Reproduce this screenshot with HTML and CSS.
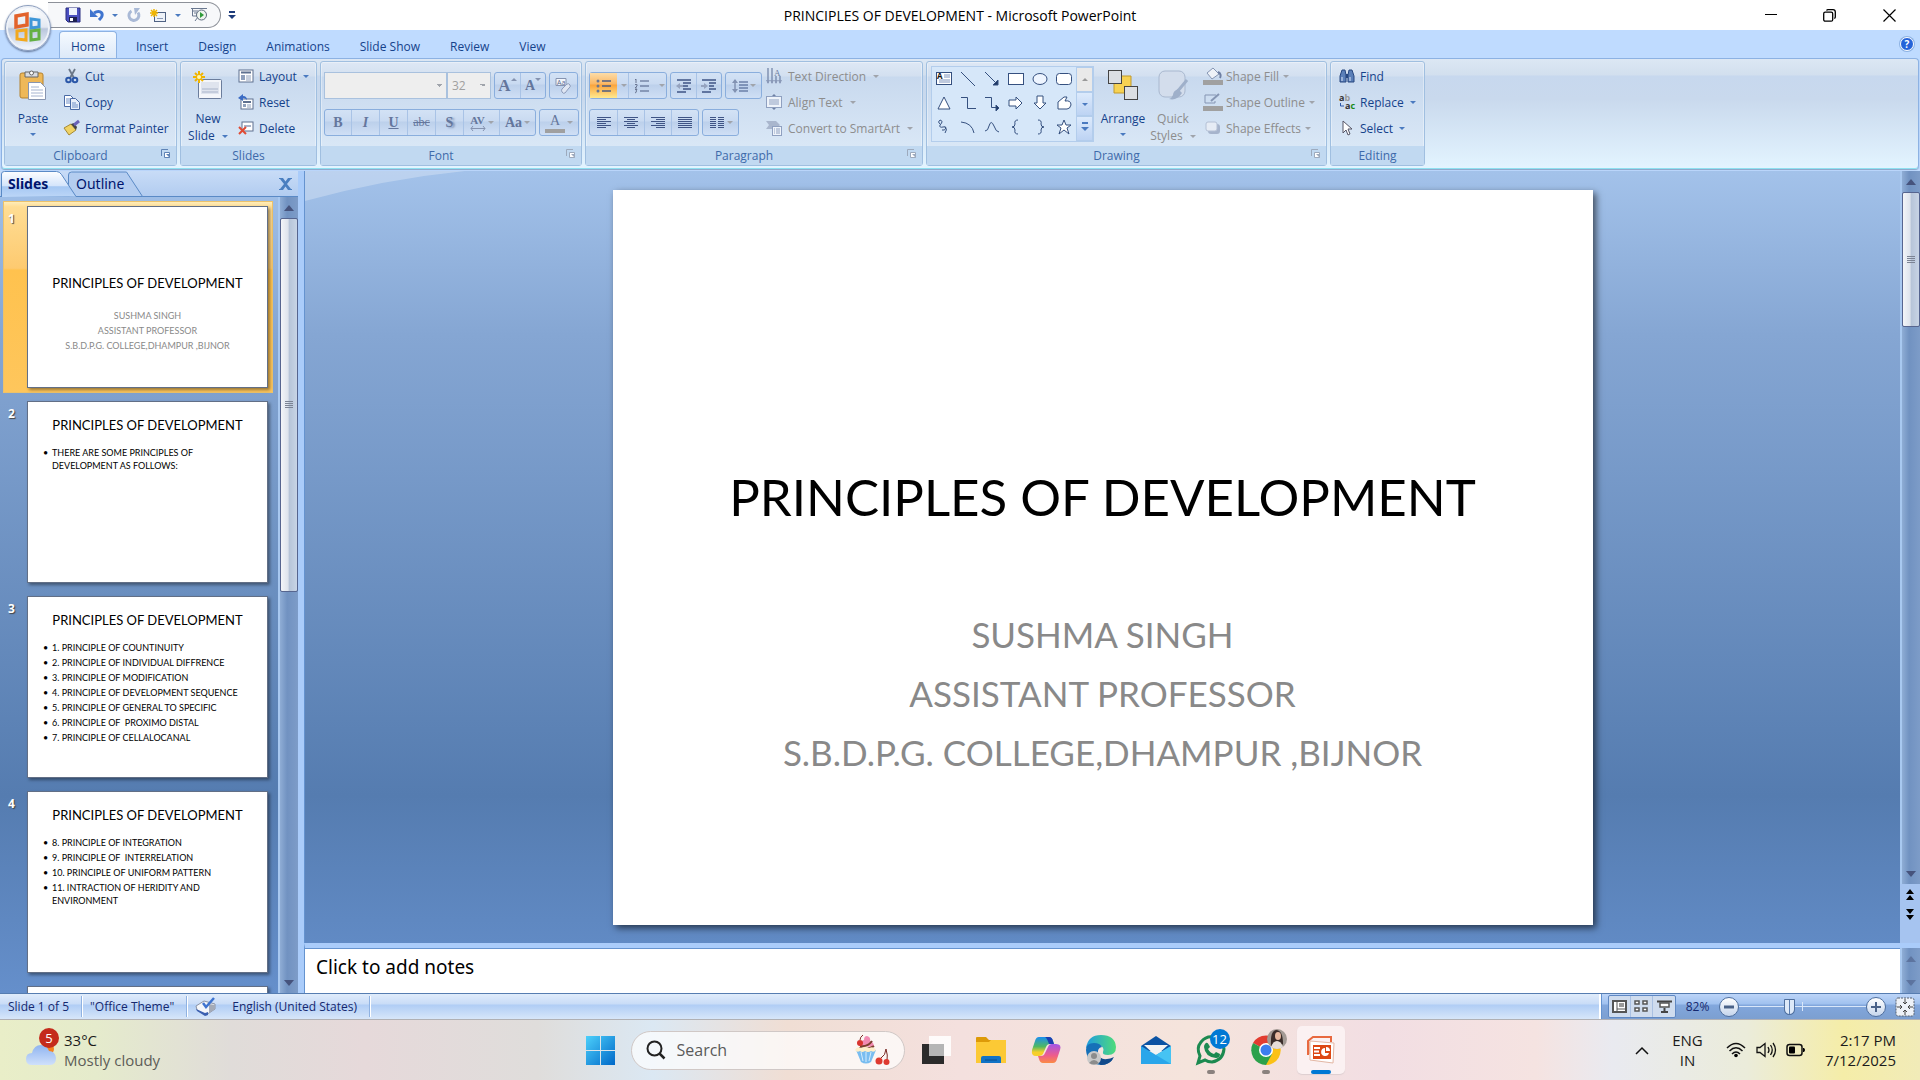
FILE: index.html
```
<!DOCTYPE html>
<html lang="en">
<head>
    <meta charset="UTF-8">
    <meta name="viewport" content="width=device-width, initial-scale=1.0">
    <title>PRINCIPLES OF DEVELOPMENT - Microsoft PowerPoint</title>
    <link rel="stylesheet" href="styles.css">
</head>
<body>
    <!-- shared icons -->
    <svg class="defs" width="0" height="0">
        <symbol id="launcher" viewBox="0 0 10 10"><path d="M.5 7V.5H7" fill="none" stroke="currentColor"/><path d="M3.500 3.500h5v5h-5z" fill="#fff" stroke="currentColor"/><path d="M5 5l4 4V5z" fill="currentColor"/></symbol>
        <symbol id="new-slide" viewBox="0 0 30 28">
            <rect x="5.500" y="8.500" width="23" height="19" rx="1" fill="#f4f6fa" stroke="#6b7d9c"/>
            <path d="M8 11h18v12H8z" fill="#dfe4ee"/><path d="M9 18h16M9 21h16" stroke="#a9b4ca"/>
            <path d="M6 0v12M0 6h12M2 2l8 8M10 2l-8 8" stroke="#f0b400" stroke-width="2"/><circle cx="6" cy="6" r="2" fill="#fff6b0"/>
        </symbol>
    </svg>

    <header class="title-bar">
        <div class="left">
            <div class="quick-access">
                <button title="Save"><svg width="16" height="16" viewBox="0 0 16 16"><path d="M1 1h14v14H3l-2-2z" fill="#4a4fc0" stroke="#2a2f80"/><path d="M4 1h8v7H4z" fill="#eef2fc"/><path d="M4 10h8v5H4z" fill="#1d2050"/><path d="M5 11h3v3H5z" fill="#fff"/></svg></button>
                <button title="Undo"><svg width="14" height="14" viewBox="0 0 14 14"><path d="M4 5c5-3 9-1 8 3-.5 2-2 3-3 4" fill="none" stroke="#3f74cf" stroke-width="3"/><path d="M0 1v8h8z" fill="#3f74cf"/></svg></button>
                <span class="caret"></span>
                <button title="Redo"><svg width="14" height="14" viewBox="0 0 14 14"><path d="M4.500 3A5 5 0 1 0 11 4.500" fill="none" stroke="#a9b9d6" stroke-width="3"/><path d="M7 0h6L8 7z" fill="#a9b9d6"/></svg></button>
                <button title="New Slide"><svg width="17" height="13" viewBox="0 0 17 13"><rect x="4.500" y="3.500" width="11" height="9" fill="#eef2f8" stroke="#4f6284"/><path d="M7 9.500h6" stroke="#8c9bb8"/><path d="M4 0v8M0 4h8M1 1l6 6M7 1L1 7" stroke="#f0b400" stroke-width="1.500"/></svg></button>
                <span class="caret"></span>
                <button title="Slide Show"><svg width="18" height="16" viewBox="0 0 18 16"><path d="M1 1.500h16M2.500 2v7H8M5 14l3-4M3 4h5M4 6h4" fill="none" stroke="#6a7890"/><circle cx="11.500" cy="8" r="5" fill="#eef4ee" stroke="#5e6b80"/><path d="M10 5l4 3-4 3z" fill="#2f9a3a"/></svg></button>
            </div>
            <button class="customize" title="Customize"><svg width="8" height="8" viewBox="0 0 8 8"><path d="M1 1h6" stroke="#1e3c7b" stroke-width="2"/><path d="M0 4h8L4 8z" fill="#1e3c7b"/></svg></button>
        </div>
        <h1>PRINCIPLES OF DEVELOPMENT - Microsoft PowerPoint</h1>
        <div class="window-buttons">
            <button title="Minimize"><svg width="12" height="12" viewBox="0 0 12 12"><path d="M0 5.500h12" stroke="#000"/></svg></button>
            <button title="Restore"><svg width="13" height="13" viewBox="0 0 13 13"><path d="M3.500 1.500Q4 .7 5 .7h5q2.300 0 2.300 2.300v5q0 1-1 1.500" fill="none" stroke="#000" stroke-width="1.300"/><rect x=".7" y="3.200" width="9" height="9" rx="1.500" fill="none" stroke="#000" stroke-width="1.300"/></svg></button>
            <button title="Close"><svg width="13" height="13" viewBox="0 0 13 13"><path d="M.5.5l12 12M12.500.5l-12 12" stroke="#000" stroke-width="1.200"/></svg></button>
        </div>
    </header>

    <button class="office-button" title="Office Button">
        <svg width="28" height="30" viewBox="0 0 28 30">
            <path d="M2 3l11-2v11l-11 2z" fill="none" stroke="#e2622b" stroke-width="3.500"/>
            <path d="M17 6l8 1v7l-8 1z" fill="none" stroke="#3f97d8" stroke-width="3"/>
            <path d="M3 18l9-1v10l-9-1z" fill="none" stroke="#f2a81d" stroke-width="3"/>
            <path d="M17 18l8-1v9l-8 1z" fill="none" stroke="#63b043" stroke-width="3"/>
        </svg>
    </button>

    <nav class="tabs">
        <a href="#" class="active">Home</a>
        <a href="#">Insert</a>
        <a href="#">Design</a>
        <a href="#">Animations</a>
        <a href="#">Slide Show</a>
        <a href="#">Review</a>
        <a href="#">View</a>
        <button class="help" title="Help">?</button>
    </nav>

    <section class="ribbon">
        <div class="group clipboard">
            <div class="group-body">
                <button class="big"><svg width="28" height="30" viewBox="0 0 28 30"><rect x="1" y="3" width="23" height="25" rx="2" fill="#eeb858" stroke="#b5822f"/><path d="M6 2h13v5H6z" fill="#d9dce2" stroke="#666"/><circle cx="12.500" cy="3" r="2" fill="#fff" stroke="#666"/><path d="M9.500 12.500h12l5 5v12h-17z" fill="#fff" stroke="#8795b0"/><path d="M12 17h8M12 20h12M12 23h12M12 26h12" stroke="#a6b4cf"/></svg><span>Paste</span><span class="caret"></span></button>
                <div class="rows">
                    <button><svg width="16" height="16" viewBox="0 0 16 16"><path d="M5 1l5 9M11 1l-5 9" stroke="#6b7788" stroke-width="1.800"/><circle cx="4.500" cy="12" r="2.300" fill="none" stroke="#2b57a8" stroke-width="2"/><circle cx="11" cy="12" r="2.300" fill="none" stroke="#2b57a8" stroke-width="2"/></svg>Cut</button>
                    <button><svg width="16" height="16" viewBox="0 0 16 16"><path d="M.5 1.500h6l3 3v8h-9z" fill="#fff" stroke="#4a6aa5"/><path d="M6.500 4.500h5l4 4v7h-9z" fill="#e9effa" stroke="#4a6aa5"/><path d="M2 5h4M2 7h4M2 9h4M8 9h4M8 11h6M8 13h6" stroke="#6f8fc7"/></svg>Copy</button>
                    <button><svg width="16" height="16" viewBox="0 0 16 16"><path d="M0 8l7-4 5 6-7 5z" fill="#f0d264" stroke="#a58a35"/><path d="M7 4l5 6 1-3-3-4z" fill="#444"/><path d="M10 5l5-4" stroke="#6a62b8" stroke-width="3"/></svg>Format Painter</button>
                </div>
            </div>
            <div class="group-name has-launcher">Clipboard<svg class="launcher" width="10" height="10"><use href="#launcher"/></svg></div>
        </div>

        <div class="group slides">
            <div class="group-body">
                <button class="big"><svg width="30" height="28"><use href="#new-slide"/></svg><span>New</span><span>Slide <i class="caret"></i></span></button>
                <div class="rows">
                    <button><svg width="16" height="16" viewBox="0 0 16 16"><rect x="1" y="2" width="14" height="12" fill="#fff" stroke="#5f7190"/><path d="M3 4.500h10" stroke="#5f7190" stroke-width="2"/><path d="M3 7h4v5H3z" fill="#8fa0bc"/><path d="M8 8h5M8 10h5M8 12h5" stroke="#8fa0bc"/></svg>Layout <i class="caret"></i></button>
                    <button><svg width="16" height="16" viewBox="0 0 16 16"><rect x="3" y="5" width="12" height="10" fill="#fff" stroke="#5f7190"/><path d="M5 8h8" stroke="#5f7190" stroke-width="2"/><path d="M5 10h3v3H5z" fill="#8fa0bc"/><path d="M9 11h4M9 13h4" stroke="#8fa0bc"/><path d="M0 4l5-4v2c3 0 4 2 4 4-1-1-2-2-4-2v3z" fill="#3c6cc4"/></svg>Reset</button>
                    <button><svg width="16" height="16" viewBox="0 0 16 16"><rect x="4" y="2" width="11" height="9" fill="#fff" stroke="#5f7190"/><path d="M6 6h7" stroke="#a9b4ca" stroke-width="2"/><path d="M1 7l7 7M8 7l-7 7" stroke="#e04b35" stroke-width="2"/></svg>Delete</button>
                </div>
            </div>
            <div class="group-name">Slides</div>
        </div>

        <div class="group font">
            <div class="group-body tools">
                <div class="tool-row">
                    <div class="boxes">
                        <select class="font-name" aria-label="Font" disabled><option></option></select>
                        <select class="font-size" aria-label="Font Size" disabled><option>32</option></select>
                    </div>
                    <div class="set grow">
                        <button class="serif-lg">A<sup class="up"></sup></button>
                        <button>A<sup class="down"></sup></button>
                    </div>
                    <div class="set"><button><svg width="18" height="18" viewBox="0 0 18 18"><path d="M1 1.500h10v7H1z" fill="#f3f6fb" stroke="#8593b0"/><text x="2" y="8" font-size="7" fill="#5d6b8e">Aa</text><path d="M7 12l5-5q2-1 3 1t-1 3l-4 5q-2 1-3-1t0-3z" fill="#dfe6f3" stroke="#8e9cba"/></svg></button></div>
                </div>
                <div class="tool-row">
                    <div class="set letters">
                        <button><b>B</b></button>
                        <button><i>I</i></button>
                        <button><u>U</u></button>
                        <button class="small"><s>abc</s></button>
                        <button class="shadow">S</button>
                        <button class="wide small">
                            <span class="spacing">AV<svg width="16" height="5" viewBox="0 0 16 5"><path d="M1 2.500h14M3 0L1 2.500 3 5M13 0l2 2.500L13 5" fill="none" stroke="#8593b0"/></svg></span>
                            <i class="caret"></i>
                        </button>
                        <button class="wide">Aa <i class="caret"></i></button>
                    </div>
                    <div class="set"><button class="wide color"><span>A</span> <i class="caret"></i></button></div>
                </div>
            </div>
            <div class="group-name has-launcher">Font<svg class="launcher off" width="10" height="10"><use href="#launcher"/></svg></div>
        </div>

        <div class="group paragraph">
            <div class="group-body">
                <div class="tools">
                    <div class="tool-row">
                        <div class="set">
                            <button class="on"><svg width="16" height="14" viewBox="0 0 16 14"><path d="M6 2h9M6 7h9M6 12h9" stroke="#4d5d82" stroke-width="1.500"/><circle cx="2" cy="2" r="1.500"/><circle cx="2" cy="7" r="1.500"/><circle cx="2" cy="12" r="1.500"/></svg></button>
                            <button class="drop"><i class="caret"></i></button>
                            <button><svg width="16" height="16" viewBox="0 0 16 16"><path d="M6 3h9M6 8h9M6 13h9" stroke="#4d5d82"/><path d="M1 2l1-1v4M1 6.500h2v1.500l-2 2h2M1 11.500h2l-1 1.500q1.500 1-1 2" fill="none" stroke="#6a7692"/></svg></button>
                            <button class="drop"><i class="caret"></i></button>
                        </div>
                        <div class="set indent">
                            <button><svg width="16" height="14" viewBox="0 0 16 14"><path d="M1 1h14M7 4h8M7 7h5M7 10h8M1 13h9" stroke="#3f5485" stroke-width="1.500"/><path d="M0 7l4-3v2h3v2H4v2z" fill="#95a3bf"/></svg></button>
                            <button><svg width="16" height="14" viewBox="0 0 16 14"><path d="M1 1h14M8 4h7M8 7h5M8 10h7M1 13h9" stroke="#3f5485" stroke-width="1.500"/><path d="M7 7L3 4v2H0v2h3v2z" fill="#95a3bf"/></svg></button>
                        </div>
                        <div class="set"><button class="wide"><svg width="16" height="16" viewBox="0 0 16 16"><path d="M7 4h9M7 7h9M7 10h9M7 13h9" stroke="#3f5485"/><path d="M3 2v12" stroke="#8292b2" stroke-width="1.500"/><path d="M0 5l3-4 3 4zM0 11l3 4 3-4z" fill="#8292b2"/></svg><i class="caret"></i></button></div>
                    </div>
                    <div class="tool-row">
                        <div class="set">
                            <button><svg width="16" height="13"><path d="M1 1.500h14M1 3.500h9M1 5.500h14M1 7.500h9M1 9.500h14M1 11.500h9" stroke="#3f5485"/></svg></button>
                            <button><svg width="16" height="13"><path d="M1 1.500h14M4 3.500h8M1 5.500h14M4 7.500h8M1 9.500h14M4 11.500h8" stroke="#3f5485"/></svg></button>
                            <button><svg width="16" height="13"><path d="M1 1.500h14M6 3.500h9M1 5.500h14M6 7.500h9M1 9.500h14M6 11.500h9" stroke="#3f5485"/></svg></button>
                            <button><svg width="16" height="13"><path d="M1 1.500h14M1 3.500h14M1 5.500h14M1 7.500h14M1 9.500h14M1 11.500h14" stroke="#3f5485"/></svg></button>
                        </div>
                        <div class="set"><button class="wide"><svg width="16" height="13"><path d="M1 1.500h6M1 3.500h6M1 5.500h6M1 7.500h6M1 9.500h6M1 11.500h6M9 1.500h6M9 3.500h6M9 5.500h6M9 7.500h6M9 9.500h6M9 11.500h6" stroke="#3f5485"/></svg><i class="caret"></i></button></div>
                    </div>
                </div>
                <div class="rows off">
                    <button><svg width="16" height="16" viewBox="0 0 16 16"><path d="M2 0v15M6 0v15M10 8v7M14 8v7" stroke="#6d7fa3" stroke-width="1.200"/><path d="M0 12l2 4 2-4zM4 12l2 4 2-4zM8 12l2 4 2-4zM12 12l2 4 2-4z" fill="#8a99b8"/><text x="8" y="8" font-size="9" font-family="Liberation Serif, serif" fill="#6d7fa3">A</text></svg>Text Direction <i class="caret"></i></button>
                    <button><svg width="16" height="16" viewBox="0 0 16 16"><rect x=".5" y="2.500" width="15" height="11" fill="#eef3fa" stroke="#8fa0c0"/><path d="M3 6h10M3 8h10M3 10h10" stroke="#8fa0c0"/><path d="M6 2l2-2 2 2zM6 14l2 2 2-2z" fill="#6d7fa3"/></svg>Align Text <i class="caret"></i></button>
                    <button><svg width="16" height="16" viewBox="0 0 16 16"><path d="M0 1h10l4 4-4 4H0l3-4z" fill="#a9b6cd"/><rect x="6.500" y="6.500" width="9" height="9" fill="#eef3fa" stroke="#8fa0c0"/><path d="M8 9h1M8 11h1M8 13h1M10 9h4M10 11h4M10 13h4" stroke="#8fa0c0"/></svg>Convert to SmartArt <i class="caret"></i></button>
                </div>
            </div>
            <div class="group-name has-launcher">Paragraph<svg class="launcher off" width="10" height="10"><use href="#launcher"/></svg></div>
        </div>

        <div class="group drawing">
            <div class="group-body">
                <div class="gallery">
                    <div class="shapes">
                        <button><svg width="16" height="14" viewBox="0 0 16 14"><rect x=".5" y=".5" width="15" height="12" fill="#fff" stroke="#35507f"/><path d="M8 3h6M8 5h6M3 8h11M3 10h11" stroke="#7f94bd"/><text x="1" y="7" font-size="8" font-weight="bold" fill="#111">A</text></svg></button>
                        <button><svg width="16" height="16"><path d="M1 1l14 14"/></svg></button>
                        <button><svg width="16" height="16"><path d="M1 1l12 12"/><path d="M14 9v5H9z" fill="#1f3864"/></svg></button>
                        <button><svg width="16" height="14"><rect x=".5" y="1.500" width="15" height="11" fill="#fff"/></svg></button>
                        <button><svg width="16" height="14"><ellipse cx="8" cy="7" rx="7" ry="5.500" fill="#eef5ff"/></svg></button>
                        <button><svg width="16" height="14"><rect x=".5" y="1.500" width="15" height="11" rx="3" fill="#fff"/></svg></button>
                        <button><svg width="16" height="16"><path d="M8 2l6 12H2z" fill="#fff"/></svg></button>
                        <button><svg width="16" height="16"><path d="M1 2.500h6.500v11H16"/></svg></button>
                        <button><svg width="16" height="16"><path d="M1 2.500h6.500v10H14"/><path d="M12 10l3 3-3 3z" fill="#1f3864"/></svg></button>
                        <button><svg width="16" height="16"><path d="M1 5h7V2l6 6-6 6v-3H1z" fill="#fff"/></svg></button>
                        <button><svg width="16" height="16"><path d="M5 1v7H2l6 6 6-6h-3V1z" fill="#fff"/></svg></button>
                        <button><svg width="16" height="16"><path d="M2 14V7l6-5h3L9 6q6-1 6 4-1 4-4 4z" fill="#fff"/></svg></button>
                        <button><svg width="16" height="16"><path d="M4 5q-3-2 0-4 4 1 0 5-1 3 3 2 3-1 3 1-1 3-4 2M9 8q3 2 0 6"/></svg></button>
                        <button><svg width="16" height="16"><path d="M1 3q11 1 13 11"/></svg></button>
                        <button><svg width="16" height="16"><path d="M1 12q3 0 4-5 2-7 5 0 2 6 5 6"/></svg></button>
                        <button><svg width="16" height="16"><path d="M10 1Q6 1 7 5q0 3-3 3 3 0 3 3-1 4 3 4"/></svg></button>
                        <button><svg width="16" height="16"><path d="M6 1q4 0 3 4 0 3 3 3-3 0-3 3 1 4-3 4"/></svg></button>
                        <button><svg width="16" height="16"><path d="M8 1l2 5h5l-4 3 2 6-5-4-5 4 2-6-4-3h5z" fill="#fff"/></svg></button>
                    </div>
                    <div class="gallery-scroll">
                        <button class="off"><i class="caret up"></i></button>
                        <button><i class="caret"></i></button>
                        <button class="more"><i class="caret"></i></button>
                    </div>
                </div>
                <button class="big"><svg width="30" height="30" viewBox="0 0 30 30"><path d="M6 6h17v17H6z" fill="#f7d252" stroke="#c0992c"/><rect x=".5" y=".5" width="13" height="13" fill="#dcdfe3" stroke="#444"/><rect x="16.500" y="16.500" width="13" height="13" fill="#dcdfe3" stroke="#444"/></svg><span>Arrange</span><span class="caret"></span></button>
                <button class="big off quick"><svg width="30" height="30" viewBox="0 0 30 30"><rect x="1" y="1" width="26" height="26" rx="6" fill="#d3ddec" stroke="#a9b8cf"/><path d="M29 10L19 22" stroke="#9fb0ca" stroke-width="3"/><path d="M20 19q-5 2-5 6-1 3-4 4 8 2 13-6z" fill="#9fb0ca"/></svg><span>Quick</span><span>Styles <i class="caret"></i></span></button>
                <div class="rows off">
                    <button><svg width="20" height="18" viewBox="0 0 20 18"><path d="M0 13h20v5H0z" fill="#a0a0a0"/><path d="M4 6l6-5 6 6-7 5z" fill="#eef2f8" stroke="#8595b3"/><path d="M15 5q4 2 2 6" fill="none" stroke="#6d7fa3" stroke-width="2"/></svg>Shape Fill <i class="caret"></i></button>
                    <button><svg width="20" height="18" viewBox="0 0 20 18"><path d="M0 13h20v5H0z" fill="#a0a0a0"/><path d="M13 2H2v8h10V8" fill="none" stroke="#8595b3"/><path d="M8 8l8-7" stroke="#8595b3" stroke-width="2"/></svg>Shape Outline <i class="caret"></i></button>
                    <button><svg width="20" height="18" viewBox="0 0 20 18"><rect x="5" y="5" width="12" height="10" rx="3" fill="#a6b4cc"/><rect x="3" y="3" width="11" height="9" rx="2" fill="#e6ecf5" stroke="#b4c0d5"/></svg>Shape Effects <i class="caret"></i></button>
                </div>
            </div>
            <div class="group-name has-launcher">Drawing<svg class="launcher off" width="10" height="10"><use href="#launcher"/></svg></div>
        </div>

        <div class="group editing">
            <div class="group-body">
                <div class="rows">
                    <button><svg width="16" height="16" viewBox="0 0 16 16"><path d="M3 2h3l1 5v7H1V8zM10 2h3l2 6v6H9V7z" fill="#5a7fb8" stroke="#27477f"/><path d="M7 6h2v4H7z" fill="#27477f"/><path d="M3 9v4M11 9v4" stroke="#dbe7fa"/></svg>Find</button>
                    <button><svg width="16" height="16" viewBox="0 0 16 16"><g font-size="9" font-weight="bold"><text x="0" y="7" fill="#333">a<tspan fill="#999">b</tspan></text><text x="6" y="15" fill="#333">a<tspan fill="#1a8a1a">c</tspan></text></g><path d="M1.500 9v3H5" fill="none" stroke="#2b57a8"/></svg>Replace <i class="caret"></i></button>
                    <button><svg width="16" height="16" viewBox="0 0 16 16"><path d="M4 1v12l3-3 2 5 2-1-2-5h4z" fill="#fff" stroke="#556"/></svg>Select <i class="caret"></i></button>
                </div>
            </div>
            <div class="group-name">Editing</div>
        </div>
    </section>

    <main class="workspace">
        <aside class="pane">
            <div class="pane-tabs">
                <svg class="tab-shape" width="145" height="26" viewBox="0 0 145 26">
                    <defs><linearGradient id="tab" x2="0" y2="1"><stop offset="0" stop-color="#fdfeff"/><stop offset=".55" stop-color="#d5e5fb"/><stop offset=".6" stop-color="#a6c8f3"/><stop offset="1" stop-color="#bcd6f7"/></linearGradient></defs>
                    <path d="M68.500 25V4q0-3 3-3h55l16 24.500H76" fill="#b4cdf0" stroke="#5a8ac6"/>
                    <path d="M1.500 26V3q0-2.500 3-2.500h52q3 0 5 3L76 25.500" fill="url(#tab)" stroke="#5a8ac6"/>
                </svg>
                <button class="active">Slides</button>
                <button>Outline</button>
                <button class="close" title="Close"><svg width="13" height="12" viewBox="0 0 13 12"><path d="M0 0h4l2.500 3.500L9 0h4v1h-1L8 6l4 5h1v1H9L6.500 8.500 4 12H0v-1h1l4-5-4-5H0z" fill="#4a7fc0"/></svg></button>
            </div>
            <div class="pane-body">
                <ol class="thumbs">
                    <li class="selected">
                        <span class="number">1</span>
                        <div class="thumb first">
                            <h3>PRINCIPLES OF DEVELOPMENT</h3>
                            <p>SUSHMA SINGH</p>
                            <p>ASSISTANT PROFESSOR</p>
                            <p>S.B.D.P.G. COLLEGE,DHAMPUR ,BIJNOR</p>
                        </div>
                    </li>
                    <li>
                        <span class="number">2</span>
                        <div class="thumb">
                            <h3>PRINCIPLES OF DEVELOPMENT</h3>
                            <ul>
                                <li>THERE ARE SOME PRINCIPLES OF<br>DEVELOPMENT AS FOLLOWS:</li>
                            </ul>
                        </div>
                    </li>
                    <li>
                        <span class="number">3</span>
                        <div class="thumb">
                            <h3>PRINCIPLES OF DEVELOPMENT</h3>
                            <ul>
                                <li>1. PRINCIPLE OF COUNTINUITY</li>
                                <li>2. PRINCIPLE OF INDIVIDUAL DIFFRENCE</li>
                                <li>3. PRINCIPLE OF MODIFICATION</li>
                                <li>4. PRINCIPLE OF DEVELOPMENT SEQUENCE</li>
                                <li>5. PRINCIPLE OF GENERAL TO SPECIFIC</li>
                                <li>6. PRINCIPLE OF &nbsp;PROXIMO DISTAL</li>
                                <li>7. PRINCIPLE OF CELLALOCANAL</li>
                            </ul>
                        </div>
                    </li>
                    <li>
                        <span class="number">4</span>
                        <div class="thumb">
                            <h3>PRINCIPLES OF DEVELOPMENT</h3>
                            <ul>
                                <li>8. PRINCIPLE OF INTEGRATION</li>
                                <li>9. PRINCIPLE OF &nbsp;INTERRELATION</li>
                                <li>10. PRINCIPLE OF UNIFORM PATTERN</li>
                                <li>11. INTRACTION OF HERIDITY AND<br>ENVIRONMENT</li>
                            </ul>
                        </div>
                    </li>
                    <li>
                        <span class="number"></span>
                        <div class="thumb"></div>
                    </li>
                </ol>
                <div class="scrollbar">
                    <i class="arrow up"></i>
                    <div class="scroll-thumb"><i class="grip"></i></div>
                    <i class="arrow down"></i>
                </div>
            </div>
        </aside>

        <div class="editor">
            <div class="canvas">
                <svg class="swoosh" width="160" height="30" viewBox="0 0 160 30"><path d="M0 0h160Q80 8 0 30z" fill="#fff" fill-opacity=".27"/></svg>
                <div class="stage">
                    <article class="slide">
                        <h2>PRINCIPLES OF DEVELOPMENT</h2>
                        <p>SUSHMA SINGH</p>
                        <p>ASSISTANT PROFESSOR</p>
                        <p>S.B.D.P.G. COLLEGE,DHAMPUR ,BIJNOR</p>
                    </article>
                </div>
                <div class="scroll-column">
                    <div class="scrollbar">
                        <i class="arrow up"></i>
                        <div class="scroll-thumb short"><i class="grip"></i></div>
                        <i class="arrow down"></i>
                    </div>
                    <div class="page-buttons">
                        <button title="Previous Slide"><svg width="8" height="11" viewBox="0 0 8 11"><path d="M4 0l4 5H0zM4 6l4 5H0z"/></svg></button>
                        <button title="Next Slide"><svg width="8" height="11" viewBox="0 0 8 11"><path d="M4 11l4-5H0zM4 5l4-5H0z"/></svg></button>
                    </div>
                </div>
            </div>
            <div class="notes">
                <textarea aria-label="Notes" placeholder="Click to add notes"></textarea>
                <div class="scrollbar disabled">
                    <i class="arrow up"></i>
                    <i class="arrow down"></i>
                </div>
            </div>
        </div>
    </main>

    <footer class="status-bar">
        <span class="cell">Slide 1 of 5</span>
        <span class="cell">"Office Theme"</span>
        <span class="cell lang"><svg width="21" height="19" viewBox="0 0 21 19"><path d="M1 9l8-5 11 3v5l-9 6-9-5z" fill="#f4f6fa" stroke="#8a93a5"/><path d="M14 7l6 1v4l-6 4z" fill="#a4abb8"/><path d="M1 12l9 4 3-1v3l-3 1-8-5z" fill="#3b5fb0"/><path d="M8 6l3 4 8-9" fill="none" stroke="#3f74cf" stroke-width="2.500"/></svg>English (United States)</span>
        <div class="view-tools">
            <div class="views">
                <button title="Normal"><svg width="15" height="13" viewBox="0 0 15 13"><rect x="1" y="1" width="13" height="11" fill="#fff" stroke="#555" stroke-width="2"/><path d="M5 1v11M5 9h9" stroke="#555"/><path d="M7 3h5v4H7z" fill="#999"/></svg></button>
                <button title="Slide Sorter"><svg width="15" height="13" viewBox="0 0 15 13"><path d="M1 1h4v3H1zM9 1h4v3H9zM1 8h4v3H1zM9 8h4v3H9z" fill="#fff" stroke="#555" stroke-width="1.500"/></svg></button>
                <button title="Slide Show"><svg width="15" height="13" viewBox="0 0 15 13"><path d="M0 1.500h15" stroke="#444" stroke-width="2"/><path d="M3 3h9v4H3z" fill="#fff" stroke="#555" stroke-width="1.500"/><path d="M7.500 8v4M4 12h7" stroke="#444" stroke-width="2"/></svg></button>
            </div>
            <span class="percent">82%</span>
            <button class="round" title="Zoom Out"><svg width="10" height="10"><path d="M0 5h10" stroke="#4a6288" stroke-width="3"/></svg></button>
            <input type="range" aria-label="Zoom" min="0" max="100" value="39">
            <button class="round" title="Zoom In"><svg width="10" height="10"><path d="M0 5h10M5 0v10" stroke="#4a6288" stroke-width="2"/></svg></button>
            <button class="fit" title="Fit slide to window"><svg width="20" height="20" viewBox="0 0 20 20"><rect x="1" y="1" width="18" height="18" rx="2" fill="#eef2f8" stroke="#56606f" stroke-dasharray="2 1"/><path d="M10 2v5M10 13v5M2 10h5M13 10h5M8 5l2 2 2-2M8 15l2-2 2 2M5 8l2 2-2 2M15 8l-2 2 2 2" fill="none" stroke="#444"/></svg></button>
        </div>
    </footer>

    <div class="taskbar">
        <button class="weather">
            <span class="weather-icon">
                <svg width="32" height="30" viewBox="0 0 32 30"><defs><linearGradient id="cloud" x2="0" y2="1"><stop offset="0" stop-color="#8fb4f0"/><stop offset="1" stop-color="#cfe0fb"/></linearGradient></defs><circle cx="23" cy="12" r="6" fill="#f58220"/><path d="M7 28q-6 0-6-6t6-6q2-8 9-8 6 0 8 6 6 0 7 7 0 7-6 7z" fill="url(#cloud)"/></svg>
                <b class="badge">5</b>
            </span>
            <span class="weather-text"><span>33°C</span><small>Mostly cloudy</small></span>
        </button>

        <div class="apps">
            <button title="Start"><svg width="30" height="30" viewBox="0 0 30 30"><defs><linearGradient id="win" x2="1" y2="1"><stop offset="0" stop-color="#4cd0fb"/><stop offset="1" stop-color="#0068c8"/></linearGradient></defs><path d="M1 1h14v14H1zM16 1h14v14H16zM1 16h14v14H1zM16 16h14v14H16z" fill="url(#win)"/></svg></button>
            <label class="search">
                <svg width="20" height="20" viewBox="0 0 20 20"><circle cx="8.500" cy="8.500" r="7" fill="none" stroke="#222" stroke-width="2"/><path d="M13.500 13.500l5 5" stroke="#222" stroke-width="2.500"/></svg>
                <input type="text" placeholder="Search">
                <svg width="36" height="30" viewBox="0 0 36 30"><path d="M2 15h20l-5 12q-5 3-10 0z" fill="#79bdf0"/><path d="M7 17l2 9M12 17v10M17 17l-2 9" stroke="#d4ecfd"/><path d="M5 11q1-5 5-6 0-4 3-4 4 1 3 5 4 1 4 6z" fill="#f28ab2"/><path d="M6 11q8 1 12-5M5 13q10 2 15-2" stroke="#7b3f2e" stroke-width="2" fill="none"/><path d="M1 15q2-4 6-2 5-2 8 0 5-2 7 2-2 3-5 1-3 2-6 0-3 2-5 0-3 2-5-1z" fill="#fdeec9"/><circle cx="6" cy="8" r="3" fill="#d8342f"/><path d="M6 5q0-3 3-5M26 24q6-4 6-10 2 6 1 12" stroke="#7c2b25" fill="none"/><circle cx="25" cy="26" r="3.500" fill="#de3a30"/><circle cx="32.500" cy="27" r="3" fill="#de3a30"/></svg>
            </label>
            <button title="Task View"><svg width="30" height="30" viewBox="0 0 30 30"><path d="M1 9h22v20H1z" fill="#2b2b2b"/><path d="M8 1h22v20H8z" fill="#fff" fill-opacity=".85"/><path d="M8 9h15v12H8z" fill="#b5b5b5"/></svg></button>
            <button title="File Explorer"><svg width="30" height="28" viewBox="0 0 30 28"><path d="M0 2q0-1 1-1h9l3 3h16v8H0z" fill="#dd9a08"/><path d="M0 6h13l2-2h15v23H0z" fill="#fcc935"/><path d="M5 27v-5q0-2 2-2h16q2 0 2 2v5z" fill="#1173c6"/><path d="M9 24h12" stroke="#0a4f8c"/></svg></button>
            <button title="Copilot"><svg width="30" height="28" viewBox="0 0 30 28"><defs><linearGradient id="cp1" x2="0" y2="1"><stop offset="0" stop-color="#1a8ff0"/><stop offset=".5" stop-color="#4fb862"/><stop offset=".8" stop-color="#f6cf2a"/></linearGradient><linearGradient id="cp2" x2="0" y2="1"><stop offset="0" stop-color="#a355e8"/><stop offset=".6" stop-color="#ee5c8c"/><stop offset="1" stop-color="#fb8b45"/></linearGradient></defs><path d="M8 1h10q3 0 4 4l1 3h-4q-3 0-4 3l-3 7q-1 2-4 2H5q-5 0-4-6l3-9q1-4 4-4z" fill="url(#cp1)"/><path d="M14 1h4q3 0 4 4l1 3h-5q-2-6-4-7z" fill="#1c3fb0"/><path d="M22 27H12q-3 0-4-4l-1-3h3q3 0 4-3l3-6q1-3 4-3h4q6 0 4 6l-3 9q-1 4-4 4z" fill="url(#cp2)"/></svg></button>
            <button title="Edge"><svg width="30" height="30" viewBox="0 0 30 30"><defs><linearGradient id="edge" x2="1"><stop offset="0" stop-color="#1f9be0"/><stop offset="1" stop-color="#4fdc7a"/></linearGradient></defs><path d="M0 13Q2 0 15 0q14 0 15 12 0 8-8 8-6 0-5-3 2-5-4-7Q6 8 0 13z" fill="url(#edge)"/><path d="M0 15q0-7 8-7 6 0 8 4-5 1-4 7 2 7 10 6 3 0 5-1-5 6-12 6Q1 29 0 15z" fill="#1670b8"/><path d="M12 19q2 6 9 5 3 0 7-2-4 8-13 8-5-2-3-11z" fill="#114a8b"/><circle cx="8" cy="23" r="7" fill="#c9c9c9"/><circle cx="8" cy="21" r="3" fill="#8c8c8c"/><path d="M3 28q5-6 10 0-5 3-10 0z" fill="#8c8c8c"/></svg></button>
            <button title="Mail"><svg width="30" height="28" viewBox="0 0 30 28"><path d="M0 10L15 0l15 10v5H0z" fill="#0b53a4"/><path d="M3 9h24L15 20z" fill="#f3f3f3"/><path d="M0 10l15 9 15-9v18H0z" fill="#2aa6ea"/><path d="M30 10L15 19l15 9z" fill="#46c3f3"/></svg></button>
            <button class="running" title="WhatsApp"><svg width="30" height="30" viewBox="0 0 30 30"><path d="M2 28l2-7Q0 13 5 7q5-6 12-5 10 2 11 12-1 11-12 13-4 0-7-2z" fill="none" stroke="#1c8a50" stroke-width="3"/><path d="M9 9q2-3 4 1l1 2-2 2q2 4 6 5l2-2 4 2q0 4-4 4Q9 22 8 12q0-2 1-3z" fill="#1c8a50"/></svg><b class="badge blue">12</b></button>
            <button class="running" title="Chrome"><svg width="30" height="30" viewBox="0 0 30 30"><path d="M15 15L2 8a15 15 0 0 1 26 0z" fill="#e23c30"/><path d="M15 15V8h13a15 15 0 0 1-13 22z" fill="#fbc116"/><path d="M15 15l6 4-6 11A15 15 0 0 1 2 8z" fill="#2ba14b"/><circle cx="15" cy="15" r="7" fill="#fff"/><circle cx="15" cy="15" r="5.500" fill="#3b7ded"/></svg>
                <svg class="avatar" width="20" height="20" viewBox="0 0 20 20"><circle cx="10" cy="10" r="10" fill="#a39a94"/><path d="M4 17Q3 2 9 1q7 0 7 14l-3 3z" fill="#3a2c29"/><ellipse cx="11" cy="7" rx="3" ry="4" fill="#e8b9a0"/><path d="M4 18q2-6 6-6t6 6q-6 4-12 0z" fill="#e6ddd8"/></svg></button>
            <button class="current" title="PowerPoint"><svg width="30" height="30" viewBox="0 0 30 30"><path d="M2 20V6l5-4h18v5" fill="none" stroke="#e8693f" stroke-width="2"/><path d="M3 7h19v12H3z" fill="#f6b79c"/><path d="M4 6l24 2-1 20-23-3z" fill="#fff" stroke="#e3b7a4"/><path d="M7 10h18v14H7z" fill="#dd4814"/><path d="M8 13h6M8 16.500h5M8 20h6" stroke="#fff" stroke-width="2"/><path d="M19 13a4 4 0 1 0 4 5h-4z" fill="#fff"/><path d="M20 12q4 0 4 4h-4z" fill="#fff"/></svg></button>
        </div>

        <div class="tray">
            <button title="Show hidden icons"><svg width="14" height="9" viewBox="0 0 14 9"><path d="M1 8l6-6 6 6" fill="none" stroke="#111" stroke-width="1.500"/></svg></button>
            <button class="language">ENG<br>IN</button>
            <button class="status-icons">
                <svg width="20" height="16" viewBox="0 0 20 16"><path d="M1 6q9-9 18 0M3.500 9q6.500-6.500 13 0M6 12q4-4 8 0" fill="none" stroke="#111" stroke-width="1.500"/><circle cx="10" cy="13.500" r="1.800"/></svg>
                <svg width="20" height="16" viewBox="0 0 20 16"><path d="M1 5.500h3l5-4v13l-5-4H1zM12 5q2 3 0 6M14.500 3q3.500 5 0 10M17 1q5 7 0 14" fill="none" stroke="#111" stroke-width="1.300"/></svg>
                <svg width="20" height="14" viewBox="0 0 20 14"><rect x="1" y="1.500" width="15" height="11" rx="2.500" fill="none" stroke="#111" stroke-width="1.500"/><rect x="3" y="3.500" width="6" height="7" rx="1"/><path d="M17 5h1q2 2 0 4h-1z"/></svg>
            </button>
            <button class="clock">2:17 PM<br>7/12/2025</button>
        </div>
    </div>
</body>
</html>
```
FILE: styles.css
```
* {
    box-sizing: border-box;
}

body {
    margin: 0;
    height: 100vh;
    display: flex;
    flex-direction: column;
    overflow: hidden;
    font-family: "Open Sans", "Noto Sans", sans-serif;
    font-size: 12px;
    color: #15428b;
    background: #bfdbff;
}

button {
    font: inherit;
    color: inherit;
    background: none;
    border: none;
    padding: 0;
    display: flex;
    align-items: center;
    justify-content: center;
}

svg {
    flex: none;
    display: block;
    overflow: visible;
}

.defs {
    position: absolute;
}

.caret {
    display: inline-block;
    border: 3px solid transparent;
    border-top: 3px solid #4a7ac0;
    border-bottom: 0;
    margin-left: 4px;
    vertical-align: middle;
}

.caret.up {
    border-top: 0;
    border-bottom: 3px solid #999;
}

.off .caret,
.font .caret,
.paragraph .caret {
    border-top-color: #a0a4ab;
}

/* title bar */

.title-bar {
    flex: none;
    height: 30px;
    background: #fff;
    display: grid;
    grid-template-columns: 1fr auto 1fr;
    align-items: center;
}

.title-bar h1 {
    margin: 0;
    font-size: 14px;
    font-weight: normal;
    color: #000;
}

.left {
    display: flex;
    align-items: center;
}

.quick-access {
    width: 173px;
    height: 26px;
    margin-left: 48px;
    padding: 0 12px 0 17px;
    border: 1px solid #8d9199;
    border-left: 0;
    border-radius: 0 13px 13px 0;
    background: #f7f8fa;
    display: flex;
    align-items: center;
    justify-content: space-between;
}

.quick-access .caret {
    margin: 0;
}

.customize {
    margin-left: 7px;
}

.window-buttons {
    justify-self: end;
    display: flex;
}

.window-buttons button {
    width: 58px;
    height: 28px;
}

.window-buttons button:last-child {
    width: 62px;
}

.office-button {
    position: absolute;
    left: 5px;
    top: 5px;
    width: 46px;
    height: 46px;
    border-radius: 50%;
    border: 1px solid #8b9dbd;
    background: linear-gradient(#fff 0%, #e3e8f1 48%, #b9c6dc 52%, #f4f8ff 100%);
    box-shadow: inset 0 0 0 2px #eef2f8, 0 1px 2px #5b6f93;
}

/* tabs */

.tabs {
    flex: none;
    height: 28px;
    padding-left: 59px;
    display: flex;
    align-items: flex-end;
    background: #bfdbff;
}

.tabs a {
    height: 27px;
    padding: 0 15px;
    line-height: 31px;
    color: #15428b;
    text-decoration: none;
}

.tabs .active {
    margin-right: 4px;
    padding: 0 11px;
    border: 1px solid #8db2e3;
    border-bottom: 0;
    border-radius: 4px 4px 0 0;
    background: linear-gradient(#f5faff, #dde9f8);
    line-height: 29px;
}

.help {
    width: 14px;
    height: 14px;
    margin: auto 6px auto auto;
    border-radius: 50%;
    background: #2563d9;
    border: 1px solid #fff;
    box-shadow: 0 0 0 1px #8db2e3;
    color: #fff;
    font-size: 10px;
    font-weight: bold;
}

/* ribbon */

.ribbon {
    flex: none;
    height: 111px;
    margin: 0 1px 2px;
    padding: 2px;
    display: flex;
    gap: 3px;
    border: 1px solid #8db2e3;
    border-bottom-color: #8ee0f0;
    border-radius: 4px;
    background: linear-gradient(#dce7f4 0, #d2dfee 16px, #c7d8ee 17px, #c9d9ed 40px, #e3f4ff 100%);
    box-shadow: 0 1px 1px #8ba4c7;
}

.group {
    display: flex;
    flex-direction: column;
    border: 1px solid #a0bfe0;
    border-radius: 3px;
    background: linear-gradient(#dee8f5 0, #d3e0f0 14px, #c8d9ee 15px, #d9e7f6 84px);
    box-shadow: inset 0 0 0 1px rgba(255, 255, 255, .35);
}

.group-body {
    flex: 1;
    min-height: 0;
    display: flex;
}

.group-name {
    position: relative;
    flex: none;
    height: 19px;
    line-height: 20px;
    text-align: center;
    color: #3e6aaa;
    background: #c1d9f1;
}

.has-launcher {
    padding-right: 20px;
}

.launcher {
    position: absolute;
    right: 5px;
    top: 3px;
    color: #5f83b5;
}

.launcher.off {
    color: #9daabd;
}

.clipboard { width: 173px; }
.slides { width: 137px; }
.font { width: 262px; }
.paragraph { width: 338px; }
.drawing { width: 401px; }
.editing { width: 95px; }

.big {
    width: 56px;
    padding-top: 8px;
    flex-direction: column;
    justify-content: flex-start;
    line-height: 17px;
}

.big svg {
    height: 30px;
    margin-bottom: 10px;
}

.big > .caret {
    margin: 6px 0 0;
}

.slides .big {
    width: 54px;
}

.big.off,
.rows.off {
    color: #8d8d8d;
}

.rows {
    display: flex;
    flex-direction: column;
    padding: 1px 0 0 3px;
}

.rows button {
    height: 26px;
    gap: 5px;
    justify-content: flex-start;
    white-space: nowrap;
}

.rows .caret {
    margin: 0 0 0 1px;
}

.tools {
    flex-direction: column;
    padding: 10px 3px 0;
}

.tool-row {
    display: flex;
    gap: 3px;
    margin-bottom: 10px;
}

.boxes {
    display: flex;
}

.boxes select {
    appearance: none;
    height: 27px;
    padding: 0 4px;
    border: 1px solid #a9c1de;
    border-radius: 0;
    font: inherit;
    color: #a0a0a0;
    opacity: 1;
    background-color: #eee;
    background-image: linear-gradient(45deg, transparent 50%, #a0a4ab 50%), linear-gradient(-45deg, transparent 50%, #a0a4ab 50%);
    background-size: 3px 3px;
    background-position: right 7px center, right 4px center;
    background-repeat: no-repeat;
}

.boxes .font-name { width: 123px; }
.boxes .font-size { width: 44px; }

.set {
    height: 27px;
    display: flex;
    border: 1px solid #8aaedd;
    border-radius: 3px;
    background: linear-gradient(#d3e2f5 0, #c9daf1 11px, #bcd0eb 12px, #cfdff5 100%);
}

.set button {
    width: 27px;
    border-left: 1px solid #a9c3e6;
    color: #64769c;
}

.set button:first-child {
    border-left: 0;
}

.set .wide {
    width: 35px;
}

.set .drop {
    width: 11px;
    border-left: 0;
}

.set .caret {
    margin-left: 2px;
}

.set .on {
    background: linear-gradient(#fcdca8 0, #fbb763 11px, #fba43c 12px, #ffe98f 100%);
}

.on svg {
    fill: #6b7690;
}

.indent button,
.grow button {
    width: 25px;
}

.letters,
.grow,
.color {
    font-family: "Liberation Serif", serif;
    font-size: 14px;
}

.letters button {
    width: 28px;
    font-weight: bold;
}

.letters button:first-child {
    width: 26px;
}

.letters .small {
    font-size: 12px;
}

.letters .small s {
    font-weight: normal;
}

.letters .wide {
    width: 36px;
}

.spacing {
    font-size: 11px;
    line-height: 12px;
}

.shadow {
    text-shadow: 2px 1px 2px #7d90b5;
}

.grow button {
    font-weight: bold;
}

.grow .serif-lg {
    font-size: 17px;
}

.grow sup {
    border: 3px solid transparent;
    margin-bottom: 12px;
}

.grow .up {
    border-top: 0;
    border-bottom-color: #8593b0;
}

.grow .down {
    border-bottom: 0;
    border-top-color: #8593b0;
}

.color span {
    width: 20px;
    border-bottom: 4px solid #a0a0a0;
    line-height: 16px;
}

.set .color {
    width: 38px;
}

.gallery {
    display: flex;
    height: 76px;
    margin: 4px 4px 0 4px;
    border: 1px solid #b3cdec;
    background: #d6e7f9;
}

.shapes {
    display: grid;
    grid-template-columns: repeat(6, 24px);
    grid-template-rows: repeat(3, 24px);
}

.shapes svg {
    fill: none;
    stroke: #35507f;
}

.shapes text {
    stroke: none;
}

.gallery-scroll {
    display: flex;
    flex-direction: column;
    width: 17px;
}

.gallery-scroll button {
    flex: 1;
    border: 1px solid #b3cdec;
    background: linear-gradient(#dceafc, #bdd3f3);
}

.gallery-scroll .off {
    background: #e9e9e9;
}

.gallery-scroll .caret {
    margin: 0;
}

.gallery-scroll .off .caret {
    border-top: 0;
}

.gallery-scroll .more .caret {
    border-width: 4px 4px 0;
    box-shadow: 0 -6px 0 -1px #4a7ac0;
}

.drawing .big {
    width: 50px;
}

.drawing .rows {
    padding-left: 5px;
}

.drawing .rows button {
    gap: 3px;
}

.paragraph .rows {
    padding-left: 1px;
}

.paragraph .rows button {
    gap: 6px;
}

.editing .rows {
    padding-left: 8px;
}

/* workspace */

.workspace {
    flex: 1;
    min-height: 0;
    display: flex;
    background: linear-gradient(#a3c2ea 0, #85a6d3 20%, #557cb0 76%, #658fcb 100%);
}

.pane {
    width: 298px;
    display: flex;
    flex-direction: column;
}

.pane-tabs {
    position: relative;
    flex: none;
    height: 26px;
    display: flex;
    align-items: center;
    border-bottom: 1px solid #5a8ac6;
    background: linear-gradient(#c8dcf7, #b2ccf0);
    font-family: "Noto Sans", sans-serif;
    font-size: 14px;
    color: #00156e;
}

.tab-shape {
    position: absolute;
    left: 0;
    top: 0;
}

.pane-tabs button {
    position: relative;
    margin-left: 8px;
}

.pane-tabs .active {
    width: 48px;
    margin-right: 12px;
    justify-content: flex-start;
    font-weight: bold;
}

.pane-tabs .close {
    margin: 0 6px 0 auto;
}

.pane-body {
    flex: 1;
    min-height: 0;
    display: flex;
}

.thumbs {
    flex: 1;
    margin: 0;
    padding: 4px 5px 0 3px;
    overflow: hidden;
    list-style: none;
    font-family: Lato, sans-serif;
    color: #000;
}

.thumbs > li {
    display: flex;
    padding: 5px;
    margin-bottom: 3px;
    height: 192px;
}

.thumbs .selected {
    background: linear-gradient(#fff0c0 0, #ffdd94 6px, #fdca70 35%, #ffc24e 36%, #fec65c 100%);
    box-shadow: inset 0 0 0 1px #edc26a;
}

.number {
    width: 19px;
    padding-top: 4px;
    font-family: "Open Sans", sans-serif;
    font-size: 12px;
    font-weight: bold;
    color: #fff;
    text-shadow: 1px 1px 1px #444;
}

.thumb {
    flex: 1;
    padding-top: 14px;
    border: 1px solid #626f86;
    background: #fff;
    box-shadow: 2px 2px 3px rgba(0, 0, 0, .4);
    white-space: nowrap;
}

.thumb h3 {
    margin: 0;
    font-size: 13px;
    font-weight: normal;
    line-height: 18px;
    text-align: center;
}

.thumb p {
    margin: 0;
    font-size: 9px;
    line-height: 15px;
    text-align: center;
    color: #898989;
}

.thumb.first {
    padding-top: 67px;
}

.first h3 {
    margin-bottom: 16px;
}

.thumb ul {
    margin: 12px 0 0;
    padding: 0 0 0 24px;
    list-style: none;
    font-size: 9px;
    line-height: 13px;
}

.thumb ul li {
    position: relative;
    margin-bottom: 2px;
}

.thumb ul li::before {
    content: "•";
    position: absolute;
    left: -9px;
}

.scrollbar {
    width: 20px;
    display: flex;
    flex-direction: column;
    align-items: center;
    border-left: 2px solid #a8c8f0;
    background: linear-gradient(90deg, #8fadd5, #7192c1 40%, #7d9cc8);
}

.arrow {
    border: 5px solid transparent;
}

.arrow.up {
    margin: 8px 0 7px;
    border-top: 0;
    border-bottom: 6px solid #46537c;
}

.arrow.down {
    margin: auto 0 7px;
    border-bottom: 0;
    border-top: 6px solid #46537c;
}

.disabled .arrow {
    opacity: .5;
}

.scroll-thumb {
    width: 18px;
    height: 47%;
    display: flex;
    align-items: center;
    justify-content: center;
    border: 1px solid #56658f;
    border-radius: 2px;
    background: linear-gradient(90deg, #f3f5f8, #dde3ec 45%, #b6c4d8 50%, #c8d4e5 100%);
}

.scroll-thumb.short {
    height: 19%;
}

.grip {
    width: 8px;
    height: 8px;
    background: repeating-linear-gradient(#7c8494 0 1px, transparent 1px 2px);
}

.editor {
    flex: 1;
    min-width: 0;
    display: flex;
    flex-direction: column;
    border-left: 6px solid #aaccfa;
}

.canvas {
    position: relative;
    flex: 1;
    min-height: 0;
    display: flex;
    border-left: 1px solid #6593cf;
}

.swoosh {
    position: absolute;
    left: 0;
    top: 0;
}

.stage {
    flex: 1;
    display: flex;
    align-items: center;
    justify-content: center;
}

.slide {
    height: 735px;
    aspect-ratio: 4 / 3;
    padding-top: 271px;
    background: #fff;
    box-shadow: 3px 3px 7px rgba(0, 0, 0, .6);
    font-family: Lato, sans-serif;
    text-align: center;
}

.slide h2 {
    margin: 0 0 72px;
    font-size: 51px;
    font-weight: normal;
    line-height: 72px;
    color: #000;
}

.slide p {
    margin: 0;
    font-size: 35px;
    line-height: 59px;
    color: #898989;
}

.scroll-column {
    display: flex;
    flex-direction: column;
}

.scroll-column .scrollbar {
    flex: 1;
}

.page-buttons {
    height: 59px;
    padding-top: 5px;
    background: #a6c4f0;
}

.page-buttons button {
    width: 20px;
    height: 20px;
    align-items: flex-start;
}

.notes {
    flex: none;
    height: 50px;
    display: flex;
    border-top: 5px solid #aaccfa;
    border-left: 1px solid #6593cf;
    background: #fff;
}

.notes textarea {
    flex: 1;
    padding: 5px 11px;
    border: 0;
    border-top: 1px solid #6593cf;
    resize: none;
    font-family: "Noto Sans", sans-serif;
    font-size: 19px;
    line-height: 26px;
}

.notes textarea::placeholder {
    color: #000;
}

/* status bar */

.status-bar {
    flex: none;
    height: 27px;
    display: flex;
    align-items: center;
    border-top: 1px solid #567db1;
    border-bottom: 1px solid #b0b0b4;
    background: linear-gradient(#e0ecfb 0, #c9dcf7 10px, #b0cdf5 11px, #d7e6f9 100%);
    color: #15286e;
}

.cell {
    height: 21px;
    padding: 0 12px 0 8px;
    display: flex;
    align-items: center;
    border-right: 1px solid #8fb2e2;
    box-shadow: 1px 0 0 #fff;
}

.lang {
    gap: 16px;
}

.view-tools {
    margin-left: auto;
    height: 25px;
    padding: 0 5px 0 6px;
    display: flex;
    align-items: center;
    border-left: 1px solid #6593cf;
    box-shadow: -2px 0 0 #fff;
    background: linear-gradient(#bdd5f8 0, #a0c1ef 10px, #82a7dd 11px, #7c9fd0 100%);
}

.views {
    display: flex;
    height: 23px;
    border: 1px solid #5f88c3;
    border-radius: 2px;
    background: #cfdcee;
}

.views button {
    width: 22px;
    border-right: 1px solid #a9c0e2;
}

.views button:last-child {
    border-right: 0;
}

.percent {
    width: 43px;
    text-align: center;
}

.round {
    width: 20px;
    height: 20px;
    border: 1px solid #4f6f9e;
    border-radius: 50%;
    background: linear-gradient(#fff, #c5d5ec);
}

.status-bar input {
    appearance: none;
    width: 127px;
    height: 20px;
    margin: 0;
    background:
        linear-gradient(#d9e7fa, #d9e7fa) center / 100% 1px no-repeat,
        linear-gradient(#d9e7fa, #d9e7fa) center / 1px 9px no-repeat;
}

.status-bar input::-webkit-slider-thumb {
    appearance: none;
    width: 11px;
    height: 16px;
    border: 1px solid #4f6f9e;
    border-radius: 1px 1px 6px 6px;
    background: linear-gradient(90deg, #dce8f8 45%, #5b7db0 45% 55%, #dce8f8 55%);
}

.fit {
    margin-left: 9px;
}

/* taskbar */

.taskbar {
    flex: none;
    height: 60px;
    display: grid;
    grid-template-columns: 1fr auto 1fr;
    align-items: center;
    background: linear-gradient(90deg, #e9eec8 0, #e5ebcc 5%, #e0dcd9 12%, #e6d9da 19%, #dfdddb 28%, #dbe8f3 34%, #f0ded4 41%, #f4e0de 50%, #f5e4dc 62%, #f2dee3 72%, #f5e3e1 80%, #e9eaf0 84%, #ebecda 91%, #f5eda8 96%, #f1ebb8 100%);
    font-size: 15px;
    color: #1b1b1b;
}

.weather {
    justify-self: start;
    gap: 7px;
    margin-left: 25px;
    text-align: left;
}

.weather-icon {
    position: relative;
    padding-top: 4px;
}

.badge {
    position: absolute;
    left: 14px;
    top: -5px;
    width: 20px;
    height: 20px;
    border-radius: 50%;
    background: #c42b1c;
    color: #fff;
    font-size: 13px;
    font-weight: normal;
    line-height: 20px;
    text-align: center;
}

.weather-text {
    display: flex;
    flex-direction: column;
    line-height: 20px;
}

.weather-text small {
    font-size: 15px;
    color: #5d5d58;
}

.apps {
    display: flex;
    align-items: center;
    gap: 7px;
}

.apps button {
    position: relative;
    width: 48px;
    height: 48px;
    border-radius: 5px;
}

.search {
    width: 274px;
    height: 39px;
    padding: 0 14px;
    display: flex;
    align-items: center;
    border: 1px solid #d0c8c6;
    border-radius: 20px;
    background: rgba(255, 255, 255, .7);
}

.search input {
    flex: 1;
    min-width: 0;
    padding: 0 11px;
    border: 0;
    background: none;
    font: inherit;
    font-size: 16px;
}

.search input::placeholder {
    color: #5a5a5a;
}

.badge.blue {
    left: 23px;
    top: 3px;
    background: #0078d4;
}

.avatar {
    position: absolute;
    left: 25px;
    top: 3px;
}

.running::after,
.current::after {
    content: "";
    position: absolute;
    left: 20px;
    bottom: 0;
    width: 8px;
    height: 4px;
    border-radius: 2px;
    background: #8a817e;
}

.apps .current {
    background: #fbf1f2;
    box-shadow: 0 1px 1px #ddcfd1;
}

.current::after {
    left: 14px;
    width: 20px;
    background: #0078d4;
}

.tray {
    justify-self: end;
    display: flex;
    align-items: center;
    padding-right: 24px;
    line-height: 20px;
}

.language {
    width: 77px;
}

.status-icons {
    gap: 10px;
}

.tray .clock {
    width: 90px;
    justify-content: flex-end;
    text-align: right;
}
```
